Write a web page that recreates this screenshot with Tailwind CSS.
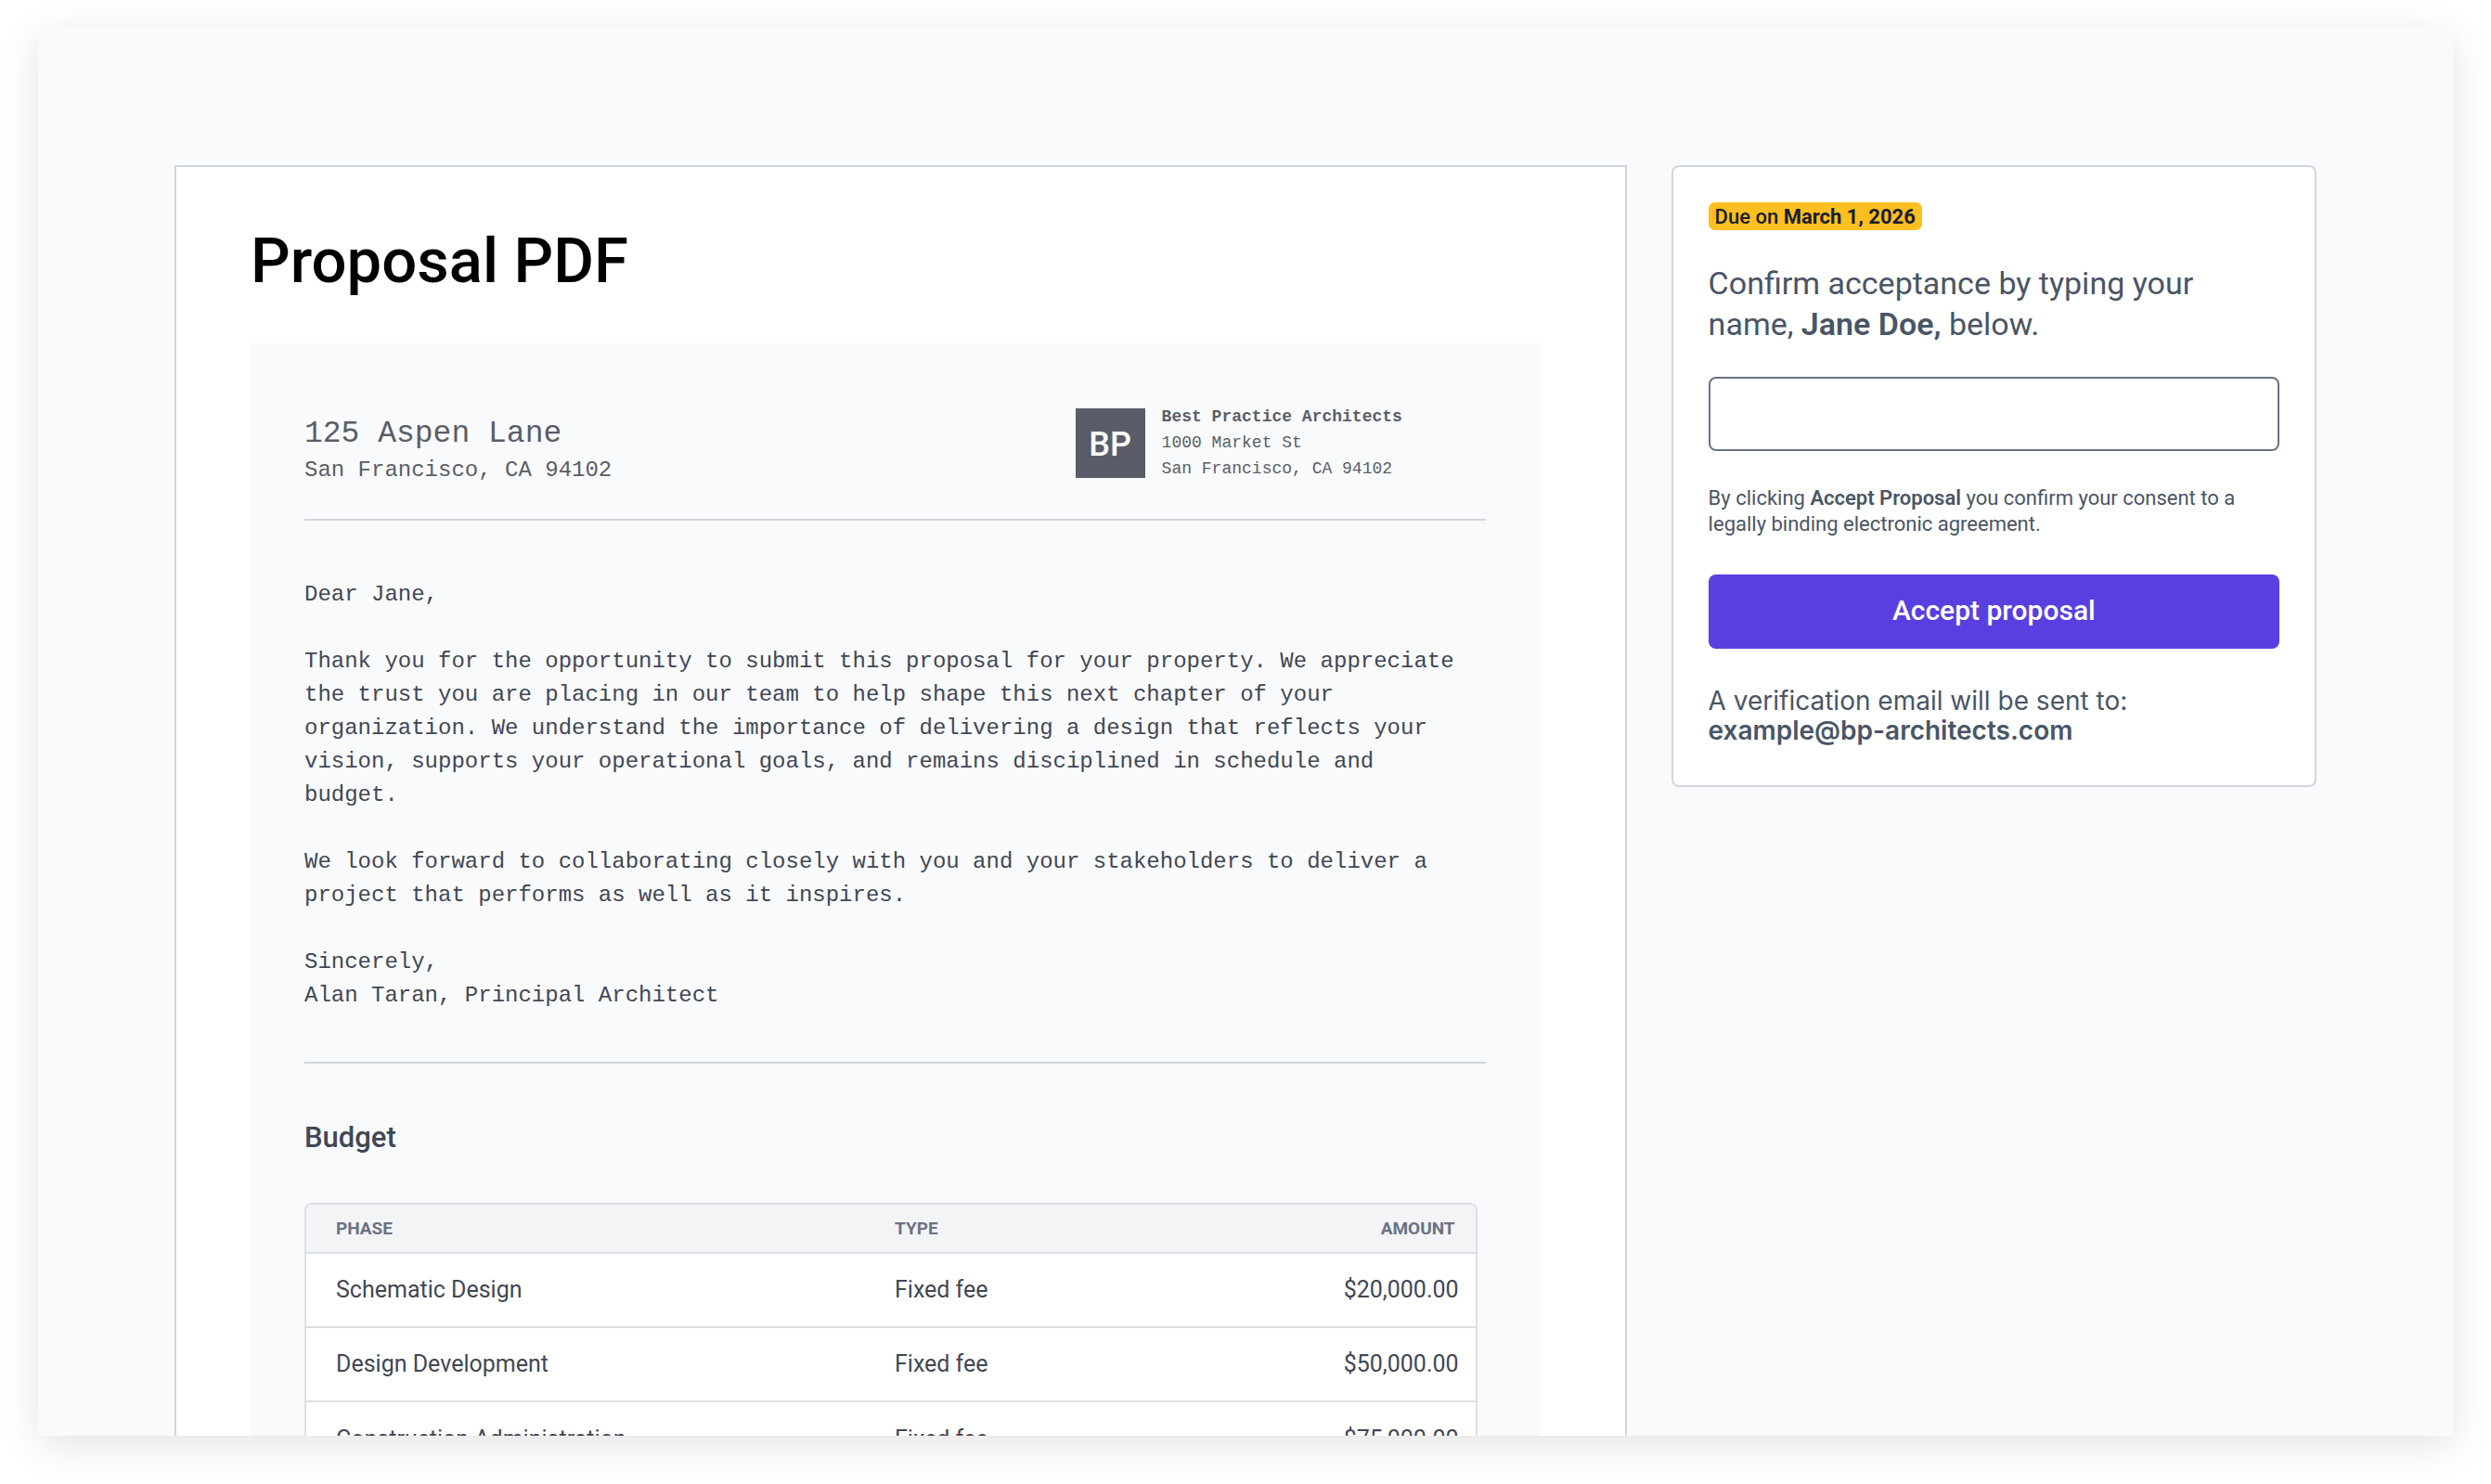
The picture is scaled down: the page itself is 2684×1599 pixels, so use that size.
<!DOCTYPE html>
<html lang="en">
<head>
  <meta charset="UTF-8" />
  <meta name="viewport" content="width=device-width, initial-scale=1" />
  <title>Proposal PDF</title>
  <script src="https://cdn.jsdelivr.net/npm/@tailwindcss/browser@4"></script>
</head>
<body class="h-screen overflow-hidden bg-white px-[41px] pt-[30px] pb-[52px] font-['Roboto',sans-serif]">
  <div class="h-full overflow-hidden bg-[#f9fafc] px-[147px] pt-[148px] shadow-[0_10px_40px_rgba(0,0,0,0.11)]">
    <div class="grid grid-cols-[9fr_4fr] items-start gap-12">

      <!-- Document -->
      <main class="border-2 border-gray-300 bg-white pt-[59px] pr-[92px] pb-20 pl-20">
        <h1 class="text-[67px] leading-[84px] font-medium text-black">Proposal PDF</h1>

        <article class="mt-[47px] bg-[#f9fafc] px-[58px] pt-[65px] pb-16 text-[#414754]">
          <header class="flex items-start justify-between border-b-2 border-gray-300 pb-[34px] font-['Liberation_Mono',monospace] text-[#5a5d68]">
            <div class="pt-3">
              <p class="text-[33px] leading-[42px]">125 Aspen Lane</p>
              <p class="text-[24px] leading-[36px]">San Francisco, CA 94102</p>
            </div>
            <div class="flex items-center gap-[18px]">
              <div class="flex size-[75px] items-center justify-center bg-[#5a5d68] pt-1 font-['Roboto',sans-serif] text-[36px] font-medium text-white">BP</div>
              <div class="w-[349px] text-[18px] leading-[28px]">
                <p class="font-bold">Best Practice Architects</p>
                <p>1000 Market St</p>
                <p>San Francisco, CA 94102</p>
              </div>
            </div>
          </header>

          <section class="space-y-9 border-b-2 border-gray-300 pt-[62px] pr-6 pb-[53px] font-['Liberation_Mono',monospace] text-[24px] leading-[36px]">
            <p>Dear Jane,</p>
            <p>Thank you for the opportunity to submit this proposal for your property. We appreciate the trust you are placing in our team to help shape this next chapter of your organization. We understand the importance of delivering a design that reflects your vision, supports your operational goals, and remains disciplined in schedule and budget.</p>
            <p>We look forward to collaborating closely with you and your stakeholders to deliver a project that performs as well as it inspires.</p>
            <p>Sincerely,<br />Alan Taran, Principal Architect</p>
          </section>

          <h2 class="mt-[60px] text-[31px] leading-[40px] font-medium">Budget</h2>

          <div class="mt-[50px] mr-[9px] overflow-hidden rounded-lg border-2 border-[#dcdfe4] bg-white">
            <table class="w-full table-fixed text-left">
              <thead class="bg-[#f3f4f6] text-[19px] text-gray-500">
                <tr class="h-[52px]">
                  <th class="w-[602px] pt-[2px] pl-8 font-bold">PHASE</th>
                  <th class="pt-[2px] pl-8 font-bold">TYPE</th>
                  <th class="pt-[2px] pr-[22px] text-right font-bold">AMOUNT</th>
                </tr>
              </thead>
              <tbody class="text-[25px]">
                <tr class="h-20 border-t-2 border-[#dcdfe4]">
                  <td class="pl-8">Schematic Design</td>
                  <td class="pl-8">Fixed fee</td>
                  <td class="pr-[18px] text-right">$20,000.00</td>
                </tr>
                <tr class="h-20 border-t-2 border-[#dcdfe4]">
                  <td class="pl-8">Design Development</td>
                  <td class="pl-8">Fixed fee</td>
                  <td class="pr-[18px] text-right">$50,000.00</td>
                </tr>
                <tr class="h-20 border-t-2 border-[#dcdfe4]">
                  <td class="pl-8">Construction Administration</td>
                  <td class="pl-8">Fixed fee</td>
                  <td class="pr-[18px] text-right">$75,000.00</td>
                </tr>
              </tbody>
            </table>
          </div>
        </article>
      </main>

      <!-- Acceptance form -->
      <form class="rounded-lg border-2 border-gray-300 bg-white px-[38px] pt-[38px] pb-[43px] text-gray-600">
        <div class="flex">
          <p class="rounded-[7px] bg-[#ffbf21] px-[7px] pt-[2px] text-[22px] leading-[28px] font-medium text-[#1a202b]">Due on <b class="font-bold">March 1, 2026</b></p>
        </div>
        <label for="signature" class="mt-[35px] block text-[34px] leading-[44px]">Confirm acceptance by typing your name, <b class="font-semibold">Jane Doe,</b> below.</label>
        <input id="signature" type="text" class="mt-[35px] block h-20 w-full rounded-lg border-2 border-gray-500 bg-white px-4 text-[28px]" />
        <p class="mt-[37px] text-[22px] leading-[28px]">By clicking <b class="font-semibold">Accept Proposal</b> you confirm your consent to a legally binding electronic agreement.</p>
        <button type="button" class="mt-[40px] block h-20 w-full rounded-lg bg-[#5a3fe0] pb-1 text-[30px] font-medium text-white">Accept proposal</button>
        <p class="mt-[40px] font-['Inter',sans-serif] text-[28px] leading-[32px]">A verification email will be sent to:<br /><b class="font-semibold">example@bp-architects.com</b></p>
      </form>

    </div>
  </div>
</body>
</html>
